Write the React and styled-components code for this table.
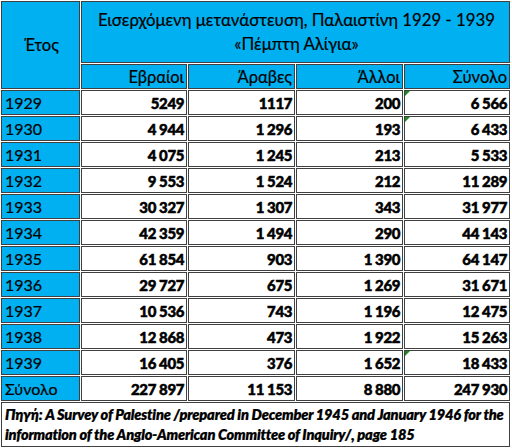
import React from "react";
import styled, { createGlobalStyle } from "styled-components";

// ---------- STYLES ----------
const Global = createGlobalStyle`
  html, body {
    margin: 0;
    padding: 0;
    background: #ffffff;
  }
  body {
    font-family: "Lato", "Noto Sans", sans-serif;
  }
`;

const Table = styled.table`
  border-collapse: separate;
  border-spacing: 1px;
  table-layout: fixed;
  width: 511px;
  font-family: "Lato", "Noto Sans", sans-serif;
  font-size: 16px;
  color: #000;
`;

const Row = styled.tr`
  height: ${(p) => p.$h || 25}px;
`;

const Head = styled.th`
  background: #00b0f0;
  border: 1px solid #404040;
  font-weight: 400;
  font-size: ${(p) => (p.$tall ? 16.8 : 16.5)}px;
  padding: 0 ${(p) => (p.$center ? 0 : 2)}px 0 2px;
  text-align: ${(p) => (p.$center ? "center" : "right")};
  vertical-align: middle;
  line-height: ${(p) => (p.$tall ? 24 : 18)}px;
  white-space: nowrap;
  -webkit-text-stroke: 0.2px #000;
`;

const Year = styled.td`
  background: #00b0f0;
  border: 1px solid #404040;
  padding: 0 0 0 3px;
  text-align: left;
  vertical-align: middle;
  line-height: 18px;
  -webkit-text-stroke: 0.2px #000;
`;

const Num = styled.td`
  position: relative;
  background: #ffffff;
  border: 1px solid #404040;
  padding: 0 2px 0 0;
  text-align: right;
  vertical-align: middle;
  font-size: 15px;
  font-weight: 900;
  line-height: 18px;
  letter-spacing: -0.4px;
  -webkit-text-stroke: 0.5px #000;
`;

const Flag = styled.span`
  position: absolute;
  left: 0;
  top: 0;
  width: 0;
  height: 0;
  border-top: 5px solid #1f8a1f;
  border-right: 5px solid transparent;
`;

const Source = styled.td`
  background: #ffffff;
  border: 1px solid #404040;
  padding: 0 0 0 3px;
  text-align: left;
  vertical-align: middle;
  font-weight: 800;
  font-style: italic;
  font-size: 14.6px;
  line-height: 20px;
  white-space: nowrap;
  letter-spacing: -0.2px;
  -webkit-text-stroke: 0.2px #000;
`;

// ---------- DATA ----------
const rows = [
  ["1929", "5249", "1117", "200", "6 566", true],
  ["1930", "4 944", "1 296", "193", "6 433", true],
  ["1931", "4 075", "1 245", "213", "5 533", false],
  ["1932", "9 553", "1 524", "212", "11 289", false],
  ["1933", "30 327", "1 307", "343", "31 977", false],
  ["1934", "42 359", "1 494", "290", "44 143", false],
  ["1935", "61 854", "903", "1 390", "64 147", false],
  ["1936", "29 727", "675", "1 269", "31 671", false],
  ["1937", "10 536", "743", "1 196", "12 475", false],
  ["1938", "12 868", "473", "1 922", "15 263", false],
  ["1939", "16 405", "376", "1 652", "18 433", true],
  ["Σύνολο", "227 897", "11 153", "8 880", "247 930", false],
];

// ---------- COMPONENT ----------
export default function App() {
  return (
    <>
      <Global />
      <Table>
        <colgroup>
          <col style={{ width: 79 }} />
          <col style={{ width: 106 }} />
          <col style={{ width: 107 }} />
          <col style={{ width: 107 }} />
          <col style={{ width: 106 }} />
        </colgroup>
        <tbody>
          <Row $h={62}>
            <Head rowSpan={2} $center>
              Έτος
            </Head>
            <Head colSpan={4} $center $tall>
              Εισερχόμενη μετανάστευση, Παλαιστίνη 1929 - 1939
              <br />
              «Πέμπτη Αλίγια»
            </Head>
          </Row>
          <Row>
            <Head>Εβραίοι</Head>
            <Head>Άραβες</Head>
            <Head>Άλλοι</Head>
            <Head>Σύνολο</Head>
          </Row>
          {rows.map(([year, jews, arabs, others, total, flag]) => (
            <Row key={year}>
              <Year>{year}</Year>
              <Num>{jews}</Num>
              <Num>{arabs}</Num>
              <Num>{others}</Num>
              <Num>
                {flag && <Flag />}
                {total}
              </Num>
            </Row>
          ))}
          <Row $h={45}>
            <Source colSpan={5}>
              Πηγή: A Survey of Palestine /prepared in December 1945 and January 1946 for the
              <br />
              information of the Anglo-American Committee of Inquiry/, page 185
            </Source>
          </Row>
        </tbody>
      </Table>
    </>
  );
}
